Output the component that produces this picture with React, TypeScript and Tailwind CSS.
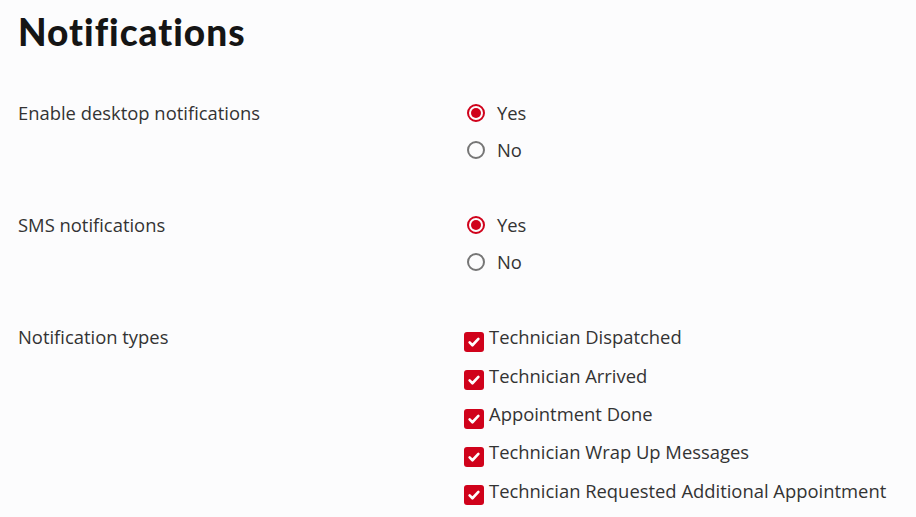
import React, { useState } from 'react';

const Radio: React.FC<{ checked: boolean; label: string; onChange: () => void }> = ({ checked, label, onChange }) => (
  <label className="flex items-center h-[37px] cursor-pointer" onClick={onChange}>
    <span
      className={`w-[18px] h-[18px] rounded-full border-2 flex items-center justify-center ml-[3px] ${
        checked ? 'border-[#d0021b]' : 'border-[#767676]'
      }`}
    >
      {checked && <span className="w-[10px] h-[10px] rounded-full bg-[#d0021b]" />}
    </span>
    <span className="ml-[12px]">{label}</span>
  </label>
);

const Check: React.FC<{ checked: boolean; label: string; onChange: () => void }> = ({ checked, label, onChange }) => (
  <label className="flex items-center h-[38.3px] cursor-pointer" onClick={onChange}>
    <span className="relative top-[5px] w-[20px] h-[20px] rounded-[3px] bg-[#d0021b] flex items-center justify-center shrink-0">
      {checked && (
        <svg className="w-[14px] h-[14px]" viewBox="0 0 16 16" fill="none" stroke="white" strokeWidth={3} strokeLinecap="round" strokeLinejoin="round">
          <path d="M3 8.5l3.2 3.2L13 4.5" />
        </svg>
      )}
    </span>
    <span className="ml-[5px]">{label}</span>
  </label>
);

const types = [
  'Technician Dispatched',
  'Technician Arrived',
  'Appointment Done',
  'Technician Wrap Up Messages',
  'Technician Requested Additional Appointment',
];

export default function App() {
  const [desktop, setDesktop] = useState(true);
  const [sms, setSms] = useState(true);
  const [checked, setChecked] = useState<boolean[]>(types.map(() => true));

  return (
    <div className="min-h-[517px] bg-[#fcfcfd] text-[#333] px-[18px] pt-[10px] font-['Open_Sans',sans-serif] text-[18.4px]">
      <h1 className="text-[37px] font-black text-[#151515] font-['Lato',sans-serif] tracking-[1px] leading-[44px]">
        Notifications
      </h1>

      <div className="grid grid-cols-[446px_1fr] mt-[40px]">
        <div className="h-[37px] flex items-center">Enable desktop notifications</div>
        <div>
          <Radio checked={desktop} label="Yes" onChange={() => setDesktop(true)} />
          <Radio checked={!desktop} label="No" onChange={() => setDesktop(false)} />
        </div>

        <div className="h-[37px] flex items-center mt-[38px]">SMS notifications</div>
        <div className="mt-[38px]">
          <Radio checked={sms} label="Yes" onChange={() => setSms(true)} />
          <Radio checked={!sms} label="No" onChange={() => setSms(false)} />
        </div>

        <div className="h-[37px] flex items-center mt-[38px]">Notification types</div>
        <div className="mt-[38px]">
          {types.map((t, i) => (
            <Check
              key={t}
              checked={checked[i]}
              label={t}
              onChange={() => setChecked(checked.map((c, j) => (j === i ? !c : c)))}
            />
          ))}
        </div>
      </div>
    </div>
  );
}
